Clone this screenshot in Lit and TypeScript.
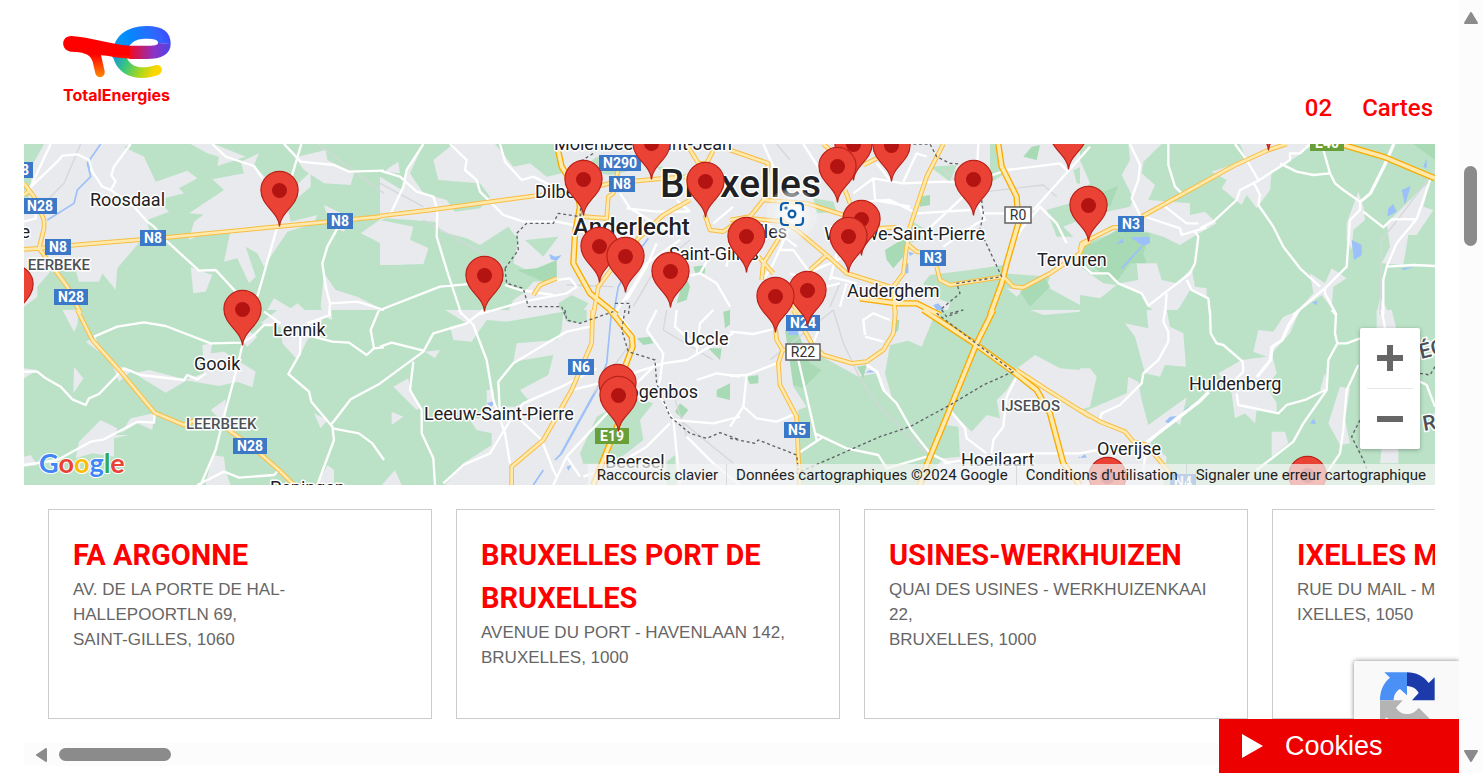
import { LitElement, html, svg, css } from "lit";
import { customElement } from "lit/decorators.js";

interface Tile {
  x: number;
  y: number;
  w: number;
  h: number;
  base: "rural" | "built";
  built: string;
  green: string;
  holes?: string;
  dark: string;
  water: string;
  stream: string;
  rail: string;
  minor: string;
  major: string;
  motorway: string;
  border: string;
}

// Geometry is stored at three units per map pixel, relative to each tile's origin.
const TILES: Tile[] = [
  {
    x: 24, y: 140, w: 1068, h: 510, base: "rural",
    green: "",
    built: `M60 12 H320 L300 22 360 50 395 125 490 92 520 115 465 145 480 160 400 180 435 215 370 240 375 270 335 320 280 385 275 450 235 400 225 425 165 425 155 390 100 370 40 440 40 470 0 500 V215 L20 150 25 75z
      M500 12 L570 12 665 50 620 65 580 78 585 50 550 40z
      M650 65 L705 40 690 75 740 130 760 230 770 180 860 95 860 140 790 200 800 245 880 225 870 250 790 275 720 380 700 340 665 320 695 410 675 430 640 355 600 365 620 270 550 275 495 300 510 245 560 208 620 230 495 220 600 150 565 118 660 100z
      M785 12 L820 50 905 30 910 60 990 100 980 135 900 130 840 90z M900 195 L975 230 960 275 920 260z M1080 230 L1010 280 1080 315z
      M500 380 L520 390 565 405 545 455 508 460z M900 400 L935 450 1000 470 1060 500 V525 H900 L890 500z M750 475 L800 505 820 490 860 525 H720z`,
    dark: "", water: "M190 65 L200 60 197 90z",
    stream: "M230 12 L190 70 200 110 160 150 150 190 70 240",
    rail: "M170 12 L120 130 70 180 M880 12 L1080 160",
    minor: "M80 12 L20 140 M0 160 L100 65 115 47 160 43 195 60 205 95 235 140 260 150 330 200 370 245 390 260 430 305 525 392 575 390 640 460 M320 12 L270 80 262 105 275 125 260 150 M565 12 L605 50 690 78 715 115 M780 12 L830 65 930 75 975 95 1080 92 M832 12 L800 120 M760 260 L700 470 M940 265 L910 320 895 370 905 440 918 490 1000 485 1080 510 M918 490 L915 525 M0 245 L35 235 35 200",
    major: "M0 328 L45 325 140 316 430 292 760 260 1070 230 M0 130 L30 170 60 240 60 265 45 325 130 440 170 520 M0 165 L20 150",
    motorway: "", border: "",
  },
  {
    x: 24, y: 310, w: 1068, h: 525, base: "rural",
    green: "",
    built: `M115 0 H165 L160 45 150 65z M185 95 L215 80 225 125z M265 165 L325 180 285 215z M330 190 L375 180 490 210 425 248z
      M535 105 L565 100 560 130 600 125 695 185 685 232 640 215 585 228 480 210 540 190z M150 170 L178 205 148 250z M0 175 L40 180 0 205z
      M155 445 L165 395 230 330 280 355 275 375 315 375 270 385 270 440 205 430z M290 370 L320 325 390 310 385 360 340 340z M560 300 L605 268 600 340z
      M0 440 L20 435 40 465 0 470z M565 435 L600 440 605 485 620 525 H545z M870 310 L910 330 890 355z M880 525 L910 465 930 480 V525z
      M655 95 L660 55 700 80 670 110z M710 40 L760 0 H920 L925 30 900 20 880 60 850 90 820 150 775 100 770 50z`,
    dark: "", water: "", stream: "", rail: "",
    minor: "M210 80 L280 50 360 37 425 48 560 100 655 98 685 80 720 45 750 45 M720 5 L770 40 M655 105 L640 170 605 300 575 420 530 525 M0 185 L40 185 65 205 110 230 145 268 185 285 195 265 225 252 290 185 300 175 350 195 480 210 490 195 520 208 545 190 M0 465 L100 450 200 395 240 388 340 335 390 338 392 308 M830 60 L828 130 793 192 855 245 862 275 925 350 930 390 880 525 M918 0 V15 L850 40 M850 75 L925 95 975 98 1028 135 1050 115 1080 112 M1065 0 L1040 60 1050 115 M1070 220 L980 268 940 320 920 345 M925 355 L1005 370 1045 400 1080 450 M520 525 L600 485 645 503 750 495 765 480",
    major: "M160 0 L205 90 290 185 392 308 480 345 515 330 M515 330 L580 335 M600 350 L690 415 765 480 810 525",
    motorway: "", border: "",
  },
  {
    x: 380, y: 140, w: 1050, h: 510, base: "built",
    built: "",
    green: `M0 12 H130 L80 100 65 150 0 110z M130 12 H220 L160 60 175 120 300 130 330 170 300 205 225 215 200 180 130 160 90 100z M345 12 H520 L545 100 500 110 450 70 400 80z
      M0 240 L20 235 165 245 185 275 260 295 300 315 385 260 415 300 400 370 440 390 500 385 530 380 V420 L460 425 430 460 400 480 380 525 H0 V375 L20 375 130 370 145 325 90 300 100 260z
      M435 300 L535 290 490 350z M600 90 L650 50 700 60 740 95 690 105z M535 490 L575 465 625 490 600 525 H545z M830 80 H850 V100z`,
    holes: "M15 95 L25 85 55 65 60 100z M0 240 L90 300 145 325 130 372 20 375 0 300z",
    dark: "M410 390 L470 385 530 360 530 410 490 425z M915 400 L930 440 920 480 890 490z M940 380 L975 375 V400 L945 398z",
    water: "M508 342 L525 350 545 345 530 362 512 358z",
    stream: "M805 295 L765 350 715 440 700 525",
    rail: "M130 240 L380 380 M560 435 L700 440 M0 130 L130 200 M760 500 L830 380 930 300",
    minor: "M130 12 L80 90 70 140 30 225 M0 92 L60 110 110 155 160 170 172 210 170 290 205 405 245 525 M210 12 L260 60 255 90 290 120 300 155 370 225 430 245 530 245 580 255 M360 12 L375 65 425 120 460 110 520 140 M0 510 L180 440 290 430 M290 525 L430 485 560 460 590 440 570 415 530 420 M375 435 L420 450 520 465 M720 160 L750 205 860 270 M740 205 L830 215 930 215 M700 525 L760 440 800 370 900 300 M870 420 L960 400 1010 430 1050 500 M1000 250 L1060 200 M830 310 L800 380 740 480 M1040 380 L1050 300 M960 400 L1000 330 M890 180 L930 215",
    major: "M0 228 L165 208 460 168 620 148 690 130 850 115 930 110 M715 85 L700 160 685 170 680 235 610 230 M930 180 L850 225 780 290 700 380 655 440 640 525 M920 12 L955 70 H980 M1010 12 L980 70 M975 225 L990 270 1030 275 1080 240 M460 465 L480 435 530 415",
    motorway: "M530 12 L545 80 590 150 600 200 585 280 580 370 630 460 710 525",
    border: "M375 385 L415 330 410 280 440 250 520 250 535 220 600 230 610 100 600 65 640 40 M375 385 L380 430 430 445 445 500 545 500 555 525 M705 490 L750 490 745 525",
  },
  {
    x: 380, y: 310, w: 1050, h: 525, base: "built",
    built: "",
    green: `M0 0 H195 L260 40 210 50 220 90 275 95 320 30 380 35 550 5 545 60 530 90 410 100 400 155 520 135 505 195 420 240 445 270 405 290 375 290 345 295 340 240 320 240 320 280 310 320 270 330 290 360 335 370 V405 L250 460 195 525 H0z
      M600 430 L650 320 760 260 820 280 780 330 790 390 700 460 610 462z M545 0 H620 V30 L600 40 560 35z M860 455 L885 435 890 525 H860z`,
    holes: "M135 125 L180 120 165 145z M35 305 L70 320 35 345z M40 230 L85 205 90 240 125 290 110 300z M5 525 L45 480 65 525z",
    dark: "M770 85 L810 80 820 100 790 105z M985 115 L1025 115 1020 150z M1030 5 L1050 0 1055 40 1035 55z M900 280 L925 300 905 325 885 305z M1010 240 L1050 220 V270 L1010 260z",
    water: "M320 280 L345 272 335 290z M560 470 L575 465 565 482z",
    stream: "M695 0 L680 160 650 240 545 430 525 450 M490 480 L460 525 M648 240 L543 430",
    rail: "M860 0 L850 60 1000 150 M900 330 L1060 460 M760 90 L640 250 M880 250 L920 380",
    minor: "M310 0 L260 40 160 70 130 125 0 220 M0 110 L35 98 130 122 M235 0 L280 45 320 150 340 270 375 370 390 460 M100 155 L90 240 125 300 125 370 160 445 165 525 M190 520 L250 465 330 430 385 340 430 280 545 230 650 175 M360 320 L355 215 400 160 500 100 560 65 630 50 M575 240 L680 215 850 160 920 150 1060 70 M400 310 L485 390 520 480 530 500 M520 525 L560 440 700 290 830 160 M560 440 L600 500 M800 60 L850 130 840 210 830 240 880 330 900 525 M610 500 L700 470 800 410 870 340 M950 130 L960 40 1000 0 M890 0 L885 50 950 110 M880 330 L1000 340 1080 320 M920 380 L1000 460 1080 525 M950 210 L1010 190 1080 200 M750 60 L720 20 M800 60 L830 0",
    major: "M638 0 L635 100 575 240 490 390 395 470 V525",
    motorway: "M690 0 L755 80 758 110 735 170 M715 340 L690 400 640 525",
    border: "M555 0 L560 30 600 40 670 15 700 5 M735 0 L725 60 745 125 825 150 830 220 870 320 930 370 980 385 1020 368 1080 390",
  },
  {
    x: 730, y: 140, w: 1050, h: 510, base: "built",
    built: "",
    green: `M780 12 H800 L825 100 780 130z M600 80 L680 75 660 125z M540 240 L590 270 V300 L530 310z M250 175 L310 185 320 215 260 220z
      M580 430 L600 405 720 390 820 375 V400 L960 410 950 440 1050 495 V525 H650 L660 490 610 470z M950 210 L1020 190 1050 240 1000 260 1030 290 980 290z M1030 90 L1080 70 V135 L1040 130z`,
    holes: "M830 445 L880 450 860 470z",
    dark: "M905 20 L930 15 920 60 880 50z M570 170 L600 165 V195 L570 200z M465 330 L530 290 520 350 490 385 470 360z M870 455 L940 405 960 440 900 500z",
    water: "M610 495 L625 490 655 525 630 525z M535 335 L552 340 540 348z M525 370 H535 V400 H525z",
    stream: "",
    rail: "M640 90 L720 160 940 135 980 170 M300 500 L330 430 M140 12 L180 60",
    minor: "M370 160 L430 115 520 130 640 125 720 130 830 90 990 70 1015 95 M520 125 L560 40 590 50 M740 100 L745 12 M430 115 L435 180 540 200 M380 185 L480 180 560 220 720 210 M560 300 L700 170 M740 180 L765 240 740 250 640 320 M910 210 L1080 20 M830 340 L880 260 930 200 980 250 1010 310 M180 260 L130 370 100 420 110 450 M200 320 L110 250 M430 270 L380 330 300 370 230 400 M320 340 L300 420 M150 330 L190 330 270 440 M350 430 L330 500 M300 410 L380 430 M760 220 L860 220 M220 12 L270 90 M100 12 L130 80 M440 70 L480 120 M180 400 L290 440 330 430",
    major: "M0 30 L115 70 100 180 M280 12 L300 30 M345 150 L360 190 M100 180 L230 190 340 225 M0 240 L60 230 100 180 M60 235 L160 245 200 270 290 345 350 400 480 440 M150 290 L100 370 95 420 M290 345 L240 390 M85 350 L130 400 M440 265 L500 262 M400 75 L440 55 M640 12 L590 110 540 260 530 320 520 400 490 440 495 525 M530 310 L560 335 620 345 M620 380 L630 420 660 435 820 410 850 440 880 443 960 400 1050 340 1060 315 1080 305 M180 480 L210 525",
    motorway: "M805 12 L815 80 860 170 865 250 830 370 815 430 780 525 M390 475 L500 490 560 490 630 525",
    border: "M550 12 L600 12 620 50 660 70 690 72 M755 180 L760 220 750 270 815 410 680 430 690 460 630 510 M660 520 L700 510",
  },
  {
    x: 730, y: 310, w: 1050, h: 525, base: "built",
    built: "",
    green: `M575 110 L620 0 H900 L940 15 1050 5 V180 L990 175 915 135 855 180 V200 L830 240 800 270 810 325 770 315 725 365 665 305 645 345 685 350 690 440 640 445 610 480 580 525 H200 L205 300 230 290 190 230 170 60 240 120 385 200 440 190 460 240 485 260 465 190 480 105 535 92z`,
    dark: "M165 60 L205 70 240 160 275 180 220 235 190 225z M50 200 L85 195 V220 L60 222z M380 170 L410 165 400 205z M495 30 H508 L505 60 495 70z",
    water: "M175 60 H205 V75 H175z M405 188 L435 187 420 180z M1045 443 L1060 432 1070 443z",
    stream: "",
    rail: "M310 0 L340 100 390 205 440 280 590 430 M120 150 L310 0",
    minor: "M0 65 L70 72 140 55 M205 150 L260 390 M0 198 L50 195 140 160 M50 195 L40 290 0 350 M40 290 L80 325 140 335 200 310 M255 370 L350 415 445 435 470 475 590 440 M205 430 L280 380 M410 165 L440 185 460 240 500 280 545 360 600 430 660 460 M412 165 L442 185 462 240 M405 75 L400 30 430 10 480 30 M405 80 L460 95 M660 300 L705 355 710 385 770 430 M860 200 L830 260 820 350 790 390 785 430 M640 460 L760 440 920 430 1050 430 M265 60 L250 100",
    major: "M135 40 L140 90 158 120 145 160 150 225 200 320 205 440 210 525 M155 120 H180 M190 0 L245 100 280 135 365 160 410 155 460 120 490 70 497 0 M860 180 L960 245 1080 320",
    motorway: "M790 0 L740 100 650 320 590 465 570 525 M580 0 L740 105 850 185 920 240 960 310 1000 460 1050 525",
    border: "M620 10 L850 185 760 225 660 285 540 350 450 380 200 490 M0 385 L75 400 85 390 200 435 205 480 M635 0 L650 20 690 5",
  },
  {
    x: 1080, y: 140, w: 1065, h: 510, base: "rural",
    green: "",
    built: `M145 12 H245 L190 65 185 100 225 135 205 180 330 190 V225 L375 215 410 250 340 290 300 315 250 290 200 275 110 275 0 315 V255 L60 220 150 200 160 175 125 105 150 60z
      M425 145 L440 120 395 95 500 60 480 12 H700 L650 50 575 95 570 150 530 205 500 165 485 195z M800 250 L835 155 850 200 855 240 820 270 815 330 800 300z
      M1010 160 L1050 125 1030 200 1060 210 1010 285 985 285 970 375 905 370 930 320 920 250z M170 370 L230 370 245 420 290 430 335 385 345 440 380 445 V470 L330 450 300 500 280 525 H240 L205 500 185 460 120 430 175 420z
      M0 380 L70 430 110 435 60 475 0 465z M690 400 L735 430 755 385 800 415 760 440 755 500 770 525 725 465 640 525 700 460z M900 470 L930 525 H890z M0 60 L30 130 0 160z`,
    dark: "M10 320 L60 300 110 270 210 280 190 340 200 370 150 370 110 425 60 395 0 345z M20 140 L70 155 115 138 90 200z M1000 12 H1065 V60z",
    water: "M150 292 L210 290 V310 L190 318z M108 312 L130 295 V308z M815 300 L845 315 V345 L822 360z M965 150 L992 138 975 195z M925 205 L940 192 950 215 922 230z M1030 80 L1040 55 V85z M965 385 L1005 380 970 391z M695 487 L712 483 710 495z",
    stream: "M185 320 L125 385",
    rail: "M1065 90 L960 230 905 300 900 525",
    minor: "M150 12 L180 75 175 120 155 175 180 225 300 265 305 285 380 262 M265 12 V75 L285 140 305 160 M255 200 L320 250 355 250 M360 265 L400 245 470 180 480 150 530 125 600 80 630 60 630 40 660 40 690 12 M465 12 L500 60 535 120 M520 125 L540 165 535 195 580 260 610 320 660 385 720 440 M600 70 L650 95 700 105 750 100 M725 12 L750 100 765 130 790 150 840 185 M940 12 L910 80 870 160 840 185 840 210 810 240 800 380 740 440 640 525 M943 12 L913 80 873 160 843 185 M850 215 L910 262 935 238 1010 237 1030 180 1050 120 M1010 237 L950 310 920 380 910 420 V525 M920 380 L1000 375 1065 378 M735 440 V460 L770 525 M345 275 L355 290 345 370 330 400 205 497 185 460 115 430 85 400 35 400 0 370 M320 420 L335 450 385 475 390 525 M260 460 L255 525",
    major: "M0 330 L5 310 100 262 115 262 M185 230 L460 78 565 30 620 12",
    motorway: "M780 12 L910 50 1065 115",
    border: "",
  },
  {
    x: 1080, y: 310, w: 1065, h: 525, base: "rural",
    green: "",
    built: `M200 0 H260 L270 50 310 70 318 170 255 165 240 200 195 190 165 80 135 40 205 55z M0 175 H30 L50 200 30 290 0 300z
      M0 310 L140 250 145 200 175 215 185 270 205 345 320 262 300 345 280 330 210 400 260 440 250 525 H0z
      M520 125 L535 60 580 65 610 20 660 0 630 70 575 130 590 190 560 230 590 280 V310 L530 300 525 340 495 310 465 325 455 250 415 190 485 150 560 140z
      M575 365 H615 L625 400 575 440z M745 340 L780 230 810 235 795 330 810 400 780 405z M890 0 H935 L950 60 H890z M905 415 H955 V460 H900z M720 240 L735 190 745 240z`,
    dark: "",
    water: "M255 335 L270 320 290 318 265 340z M312 300 L330 287 325 297z M690 340 L702 325 708 343z M0 443 L15 433 20 443z M828 175 L838 165 840 172z",
    stream: "", rail: "",
    minor: "M255 0 L250 35 265 65 265 95 235 150 190 190 185 220 120 285 65 310 60 330 M390 0 L392 70 410 100 430 105 488 155 490 185 465 210 M655 0 L625 45 605 90 575 110 570 150 530 200 M658 0 L628 45 608 90 578 110 573 150 533 200 M470 250 L475 285 595 310 620 285 675 270 735 240 M755 0 L768 15 765 70 772 100 745 150 740 240 670 340 640 395 530 480 M772 100 H800 L840 85 M835 165 L800 240 790 360 780 430 740 490 M385 245 L355 275 200 395 M387 247 L357 277 202 397 M0 430 L50 420 M905 0 L915 55 M195 440 L190 480 130 510 M1020 215 L1040 225 1065 290",
    major: "M0 300 L60 335 135 365 160 395 200 405 270 490",
    motorway: "",
    border: "M840 330 L815 380 850 450 870 500 M1020 190 L1050 195 1065 170",
  },
];

interface Label { text: string; x: number; y: number; kind?: string; end?: boolean; turn?: number }
const LABELS: Label[] = [
  { text: "Roosdaal", x: 90, y: 206 },
  { text: "e", x: 30, y: 238, end: true },
  { text: "EERBEKE", x: 90, y: 270, kind: "area", end: true },
  { text: "Lennik", x: 273, y: 336 },
  { text: "Gooik", x: 194, y: 370 },
  { text: "LEERBEEK", x: 186, y: 429, kind: "area" },
  { text: "Pepingen", x: 270, y: 494 },
  { text: "Dilbeek", x: 535, y: 198 },
  { text: "Molenbeek-Saint-Jean", x: 554, y: 150 },
  { text: "Bruxelles", x: 660, y: 197, kind: "capital" },
  { text: "Anderlecht", x: 573, y: 235, kind: "town" },
  { text: "Saint-Gilles", x: 669, y: 260 },
  { text: "Ixelles", x: 787, y: 238, end: true },
  { text: "Woluwe-Saint-Pierre", x: 985, y: 240, end: true },
  { text: "Tervuren", x: 1037, y: 266 },
  { text: "Auderghem", x: 847, y: 297 },
  { text: "Uccle", x: 684, y: 345 },
  { text: "Drogenbos", x: 698, y: 398, end: true },
  { text: "Leeuw-Saint-Pierre", x: 424, y: 420 },
  { text: "Beersel", x: 605, y: 468 },
  { text: "Hoeilaart", x: 961, y: 466 },
  { text: "IJSEBOS", x: 1001, y: 411, kind: "area" },
  { text: "Huldenberg", x: 1189, y: 390 },
  { text: "Overijse", x: 1097, y: 455 },
  { text: "ÉGION", x: 1421, y: 359, kind: "region", turn: -14 },
  { text: "RÉGION", x: 1424, y: 431, kind: "region", turn: -10 },
];

interface Shield { text: string; x: number; y: number; kind?: string }
const SHIELDS: Shield[] = [
  { text: "N28", x: 16, y: 170 },
  { text: "N28", x: 40, y: 206 },
  { text: "N8", x: 58, y: 247 },
  { text: "N8", x: 153, y: 238 },
  { text: "N28", x: 71, y: 297 },
  { text: "N8", x: 340, y: 221 },
  { text: "N28", x: 250, y: 446 },
  { text: "N290", x: 620, y: 163 },
  { text: "N8", x: 622, y: 184 },
  { text: "N6", x: 581, y: 367 },
  { text: "E19", x: 612, y: 436, kind: "euro" },
  { text: "N3", x: 933, y: 258 },
  { text: "N3", x: 1131, y: 224 },
  { text: "E40", x: 1327, y: 143, kind: "euro" },
  { text: "R0", x: 1018, y: 215, kind: "ring" },
  { text: "R22", x: 803, y: 352, kind: "ring" },
  { text: "N24", x: 803, y: 323 },
  { text: "N5", x: 797, y: 430 },
  { text: "N4", x: 1183, y: 482 },
];

const PINS: [number, number][] = [
  [1268, 151], [1068, 170], [651, 180], [853, 181], [891, 182], [837, 203],
  [583, 216], [973, 216], [705, 218], [279, 227], [1088, 242], [861, 256],
  [746, 273], [848, 273], [599, 283], [625, 293], [670, 308], [484, 312],
  [14, 321], [807, 327], [775, 333], [242, 346], [617, 420], [618, 432],
  [1307, 512], [1107, 513],
];

const STATIONS = [
  { name: "FA ARGONNE", street: "AV. DE LA PORTE DE HAL-HALLEPOORTLN 69,", city: "SAINT-GILLES, 1060" },
  { name: "BRUXELLES PORT DE BRUXELLES", street: "AVENUE DU PORT - HAVENLAAN 142,", city: "BRUXELLES, 1000" },
  { name: "USINES-WERKHUIZEN", street: "QUAI DES USINES - WERKHUIZENKAAI 22,", city: "BRUXELLES, 1000" },
  { name: "IXELLES MAIL", street: "RUE DU MAIL - MAILSTRAAT,", city: "IXELLES, 1050" },
];

@customElement("station-map")
class StationMap extends LitElement {
  static styles = css`
    :host { display: block; position: relative; height: 341px; overflow: hidden; background: #e8eaed; font-family: Roboto, sans-serif; }
    .map { display: block; width: 100%; height: 100%; }
    .rural { fill: #bbe2c6; }
    .built { fill: #e8eaed; }
    .dark { fill: #a8dab5; }
    .water { fill: #9cc0f9; }
    .line { fill: none; stroke-linejoin: round; }
    .stream { stroke: #9cc0f9; stroke-width: 5; }
    .rail { stroke: #d5d7da; stroke-width: 4; }
    .minor { stroke: #fff; stroke-width: 7; }
    .major-edge { stroke: #f8bd42; stroke-width: 14; }
    .major { stroke: #ffe9ad; stroke-width: 8; }
    .motorway-edge { stroke: #f9ab00; stroke-width: 19; }
    .motorway { stroke: #ffe9ad; stroke-width: 11; }
    .border { stroke: #5f6368; stroke-width: 4; stroke-dasharray: 9 8; }
    .label { font-size: 18px; fill: #202124; stroke: #fff; stroke-width: 3px; stroke-linejoin: round; paint-order: stroke; }
    .area { font-size: 15px; font-weight: 500; fill: #4d5156; }
    .town { font-size: 24px; font-weight: 500; }
    .capital { font-size: 39px; font-weight: 500; }
    .region { font-size: 21px; font-weight: 500; fill: #4d5156; }
    .end { text-anchor: end; }
    .plate { fill: #3c78c8; }
    .plate.euro { fill: #689f38; }
    .plate.ring { fill: #fff; stroke: #616161; stroke-width: 1.5; }
    .code { fill: #fff; font-size: 14px; font-weight: 700; text-anchor: middle; }
    .code.ring { fill: #333; font-weight: 400; }
    .pin { fill: #ea4335; stroke: #b9221a; stroke-width: 1.2; }
    .dot { fill: #b31412; }
    .google { font-family: Lato, sans-serif; font-size: 27px; font-weight: 700; stroke: #fff; stroke-width: 2px; paint-order: stroke; }
    .blue { fill: #4285f4; }
    .red { fill: #ea4335; }
    .yellow { fill: #fbbc04; }
    .green { fill: #34a853; }
    .zoom { position: absolute; right: 15px; bottom: 36px; width: 60px; background: #fff; border-radius: 2px; box-shadow: 0 1px 4px rgba(0, 0, 0, 0.3); }
    .zoom button { display: grid; place-items: center; width: 60px; height: 60px; padding: 0; border: 0; background: none; }
    .rule { height: 1px; margin: 0 7px; background: #e6e6e6; }
    .legal { position: absolute; right: 0; bottom: 0; display: flex; height: 21px; background: rgba(245, 245, 245, 0.7); }
    .legal > * { padding: 0 9px; border: 0; background: none; font: 15px/23px Roboto, sans-serif; color: #222; text-decoration: none; white-space: nowrap; }
    .legal > * + * { box-shadow: -1px 0 0 rgba(200, 204, 208, 0.6); }
  `;

  private lines(kind: "minor" | "major" | "motorway" | "rail" | "stream" | "border", cls: string) {
    return TILES.map((t) => svg`<path class="line ${cls}" transform="translate(${t.x} ${t.y}) scale(.33333)" d=${t[kind]}></path>`);
  }

  render() {
    return html`
      <svg class="map" viewBox="24 144 1411 341" preserveAspectRatio="xMidYMid slice" role="img" aria-label="Carte des stations">
        <defs>
          <radialGradient id="halo"><stop offset=".3" stop-color="#fff" stop-opacity=".75"></stop><stop offset=".8" stop-color="#f1f2f4" stop-opacity=".5"></stop><stop offset="1" stop-color="#fff" stop-opacity=".1"></stop></radialGradient>
        </defs>
        ${TILES.map((t) => svg`
          <svg x=${t.x} y=${t.y} width=${t.w / 3} height=${t.h / 3} viewBox="0 0 ${t.w} ${t.h}">
            <rect class=${t.base} width=${t.w} height=${t.h}></rect>
            <path class="built" d=${t.built}></path>
            <path class="rural" d=${t.green}></path>
            <path class="built" d=${t.holes ?? ""}></path>
            <path class="dark" d=${t.dark}></path>
            <path class="water" d=${t.water}></path>
          </svg>`)}
        ${this.lines("stream", "stream")}
        ${this.lines("rail", "rail")}
        ${this.lines("minor", "minor")}
        ${this.lines("major", "major-edge")}
        ${this.lines("motorway", "motorway-edge")}
        ${this.lines("major", "major")}
        ${this.lines("motorway", "motorway")}
        ${this.lines("border", "border")}
        ${LABELS.map((l) => svg`<text class="label ${l.kind ?? ""} ${l.end ? "end" : ""}" x=${l.x} y=${l.y} transform="rotate(${l.turn ?? 0} ${l.x} ${l.y})">${l.text}</text>`)}
        ${SHIELDS.map((s) => {
          const w = 10 + s.text.length * 8;
          return svg`<rect class="plate ${s.kind ?? ""}" x=${s.x - w / 2} y=${s.y - 8} width=${w} height="16"></rect>
            <text class="code ${s.kind ?? ""}" x=${s.x} y=${s.y + 5}>${s.text}</text>`;
        })}
        ${PINS.map(([x, y]) => svg`<g transform="translate(${x + 0.5} ${y})">
          <path class="pin" d="M0 -.5 C-.8 -15 -18.6 -21 -18.6 -37 A18.6 18.6 0 0 1 18.6 -37 C18.6 -21 .8 -15 0 -.5z"></path>
          <circle class="dot" cy="-36.5" r="7.5"></circle>
        </g>`)}
        <circle cx="792" cy="214" r="26" fill="url(#halo)"></circle>
        <g fill="none" stroke="#0b5cab" stroke-width="2.2" stroke-linecap="round">
          <path d="M788 203 H785 Q781 203 781 207 V210 M796 203 H799 Q803 203 803 207 V210 M803 218 V221 Q803 225 799 225 H796 M788 225 H785 Q781 225 781 221 V218"></path>
          <circle cx="792" cy="214" r="3.4"></circle>
          <circle cx="786" cy="208" r=".5"></circle>
        </g>
        <text class="google" x="39" y="473"><tspan class="blue">G</tspan><tspan class="red">o</tspan><tspan class="yellow">o</tspan><tspan class="blue">g</tspan><tspan class="green">l</tspan><tspan class="red">e</tspan></text>
      </svg>
      <div class="zoom">
        <button aria-label="Zoom avant"><svg width="28" height="28" viewBox="0 0 28 28"><path d="M14 1 V27 M1 14 H27" stroke="#666" stroke-width="6"></path></svg></button>
        <div class="rule"></div>
        <button aria-label="Zoom arrière"><svg width="28" height="28" viewBox="0 0 28 28"><path d="M1 14 H27" stroke="#666" stroke-width="6"></path></svg></button>
      </div>
      <div class="legal">
        <button>Raccourcis clavier</button>
        <span>Données cartographiques ©2024 Google</span>
        <a href="#conditions">Conditions d'utilisation</a>
        <a href="#signaler">Signaler une erreur cartographique</a>
      </div>
    `;
  }
}

@customElement("app-root")
class AppRoot extends LitElement {
  static styles = css`
    :host { display: grid; grid-template-columns: minmax(0, 1fr) 23px; min-height: 100vh; position: relative; background: #fff; overflow: hidden; }
    .page { padding: 0 24px; }
    .top { display: flex; justify-content: space-between; height: 144px; box-sizing: border-box; padding: 26px 2px 20px 39px; }
    .brand { display: block; }
    .brand svg { display: block; }
    .wordmark { font: 700 16px Inter, sans-serif; fill: #f00; }
    .nav { display: flex; align-items: flex-end; gap: 30px; font: 500 24px/32px Roboto, sans-serif; }
    .nav a { color: #f00; text-decoration: none; }
    .cards { display: flex; gap: 24px; margin: 0; padding: 24px; overflow: hidden; list-style: none; }
    .card { flex: none; box-sizing: border-box; width: 384px; min-height: 210px; padding: 24px; border: 1px solid #ccc; }
    .card h2 { margin: 0; font: 700 29px/43px Roboto, sans-serif; color: #f00; }
    .card p { margin: 0; font: 17px/25px "Liberation Sans", sans-serif; color: #666; }
    .hbar { display: flex; align-items: center; gap: 12px; height: 23px; padding-left: 12px; background: #fcfcfc; }
    .hthumb { width: 8%; height: 13px; border-radius: 7px; background: #8b8b8b; }
    .vbar { position: relative; z-index: 1; display: flex; flex-direction: column; align-items: center; padding: 12px 0 11px; background: #fcfcfc; }
    .vthumb { width: 13px; height: 80px; margin: 142px 0 auto; border-radius: 7px; background: #8b8b8b; }
    .vbar svg, .hbar svg { display: block; fill: #8b8b8b; stroke: #8b8b8b; stroke-width: 2; stroke-linejoin: round; }
    .badge { position: absolute; right: 23px; bottom: 54px; box-sizing: border-box; width: 105px; height: 58px; padding: 11px 24px 0 26px; overflow: hidden; background: #f9f9f9; border-radius: 2px 0 0 0; box-shadow: 0 0 5px #808080; }
    .badge svg { display: block; }
    .cookies { position: absolute; right: 23px; bottom: 0; display: flex; align-items: center; gap: 22px; width: 240px; height: 54px; padding: 0 0 0 23px; border: 0; background: #ed0000; color: #fff; font: 27px/36px "Liberation Sans", sans-serif; }
  `;

  render() {
    return html`
      <main class="page">
        <header class="top">
          <a class="brand" href="#accueil" aria-label="TotalEnergies">
            <svg width="112" height="82" viewBox="63 26 112 82">
              <defs>
                <linearGradient id="leg" x1="0" y1="0" x2="0" y2="1"><stop offset=".45" stop-color="#f00"></stop><stop offset="1" stop-color="#ff8c00"></stop></linearGradient>
                <linearGradient id="bar" gradientUnits="userSpaceOnUse" x1="268" y1="0" x2="392" y2="0"><stop offset="0" stop-color="#f00a1e"></stop><stop offset=".6" stop-color="#8c32c8"></stop><stop offset="1" stop-color="#4b46e6"></stop></linearGradient>
                <linearGradient id="arc" gradientUnits="userSpaceOnUse" x1="220" y1="130" x2="390" y2="70"><stop offset="0" stop-color="#14a0dc"></stop><stop offset=".3" stop-color="#008cff"></stop><stop offset=".8" stop-color="#3264ff"></stop><stop offset="1" stop-color="#3c46ff"></stop></linearGradient>
                <linearGradient id="tail" gradientUnits="userSpaceOnUse" x1="225" y1="130" x2="345" y2="185"><stop offset="0" stop-color="#1496dc"></stop><stop offset=".35" stop-color="#3cc878"></stop><stop offset=".7" stop-color="#aad71e"></stop><stop offset="1" stop-color="#ffd700"></stop></linearGradient>
              </defs>
              <g transform="translate(40 10) scale(.33333)">
                <path d="M218 130 C222 180 265 205 305 204 C325 203 343 199 356 194 C374 186 366 160 346 166 C300 180 266 170 258 135z" fill="url(#tail)"></path>
                <path d="M218 145 C213 85 255 48 320 48 C370 48 393 68 392 102 L354 99 C355 90 345 86 318 86 C285 86 261 98 258 145z" fill="url(#arc)"></path>
                <path d="M268 107 H315 C340 108 354 106 354 99 L392 101 C392 132 365 147 320 147 H268z" fill="url(#bar)"></path>
                <path d="M95 78 C150 81 210 103 270 107 V146 C230 145 205 137 183 136 L194 184 C196 206 170 207 166 190 L158 155 C150 128 125 127 95 125 C61 123 61 77 95 78z" fill="url(#leg)"></path>
              </g>
              <text class="wordmark" x="63" y="101">TotalEnergies</text>
            </svg>
          </a>
          <nav class="nav"><a href="#02">02</a><a href="#cartes">Cartes</a></nav>
        </header>
        <station-map></station-map>
        <ul class="cards">
          ${STATIONS.map((s) => html`<li class="card"><h2>${s.name}</h2><p>${s.street}<br />${s.city}</p></li>`)}
        </ul>
        <div class="hbar" aria-hidden="true">
          <svg width="11" height="14" viewBox="0 0 11 14"><path d="M10 1 V13 L1 7z"></path></svg>
          <div class="hthumb"></div>
        </div>
      </main>
      <div class="vbar" aria-hidden="true">
        <svg width="14" height="12" viewBox="0 0 14 12"><path d="M7 1 L13 11 H1z"></path></svg>
        <div class="vthumb"></div>
        <svg width="14" height="12" viewBox="0 0 14 12"><path d="M7 11 L13 1 H1z"></path></svg>
      </div>
      <div class="badge">
        <svg width="55" height="55" viewBox="540 96 165 165">
          <path fill="#4a90f5" d="M540 181 C540 155 548 130 570 113 L553 97 H621 V166 L600 147 C588 153 581 166 581 181z"></path>
          <path fill="#1c3aa9" d="M621 97 C648 97 670 108 686 129 L704 112 V181 H636 L656 159 C650 147 638 139 621 138z"></path>
          <path fill="#b4b4b4" d="M540 181 H608 L588 203 C597 218 610 222 622 222 C638 222 648 214 656 203 L690 237 C670 262 640 264 621 264 C595 262 575 250 560 232 L540 250z"></path>
        </svg>
      </div>
      <button class="cookies"><svg width="21" height="24" viewBox="0 0 21 24"><path d="M0 0 L21 12 L0 24z" fill="#fff"></path></svg>Cookies</button>
    `;
  }
}
